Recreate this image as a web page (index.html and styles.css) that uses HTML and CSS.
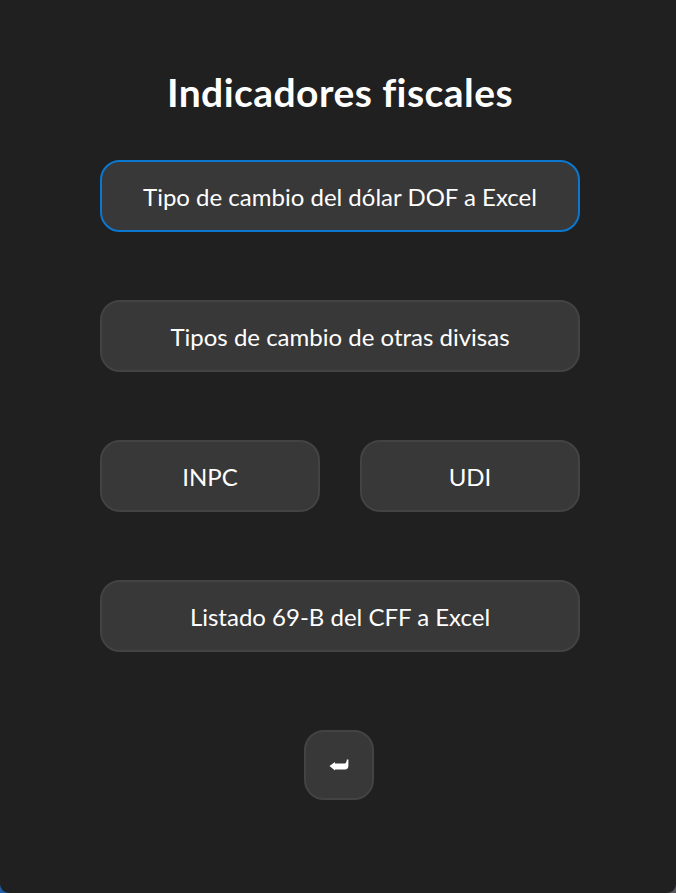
FILE: index.html
```html
<!DOCTYPE html>
<html lang="es">
  <head>
    <meta charset="UTF-8" />
    <meta name="viewport" content="width=device-width, initial-scale=1.0" />
    <title>Indicadores fiscales</title>
    <link rel="stylesheet" href="styles.css">
  </head>
  <body>
    <div class="window flex">
      <h1>Indicadores fiscales</h1>
      <div class="menu">
        <button class="btn focused">Tipo de cambio del dólar DOF a Excel</button>
        <button class="btn">Tipos de cambio de otras divisas</button>
        <div class="row">
          <button class="btn">INPC</button>
          <button class="btn">UDI</button>
        </div>
        <button class="btn">Listado 69-B del CFF a Excel</button>
      </div>
      <button class="btn back" aria-label="Volver">
        <svg width="20" height="12" viewBox="0 0 20 12">
          <path d="M0.5 7 L6 3 V4.6 H15 C16.6 4.6 17.6 3.8 17.8 0.6 H19.4 V6.8 C19.4 9.2 18.2 10.6 16 10.6 H6 V11.6 Z" fill="#fff" />
        </svg>
      </button>
    </div>
  </body>
</html>
```

FILE: styles.css
```css
* {
  margin: 0;
  padding: 0;
  box-sizing: border-box;
  font-family: Lato, "Open Sans", Arial, sans-serif;
}
html,
body {
  height: 100%;
  background: linear-gradient(to right, #1f5fa8, #55555a);
}
.flex {
  display: flex;
  flex-direction: column;
  align-items: center;
}

.window {
  height: 893px;
  padding: 67px 0 0 4px;
  background: #202020;
  border-radius: 0 0 9px 9px;
}

h1 {
  color: #fff;
  font-size: 39px;
  letter-spacing: 0.45px;
  line-height: 50px;
  font-weight: 700;
  margin-bottom: 43px;
}

.menu {
  display: flex;
  flex-direction: column;
  gap: 68px;
  width: 480px;
}

.row {
  display: flex;
  gap: 40px;
}

.row .btn {
  flex: 1;
}

.btn {
  height: 72px;
  padding-top: 1px;
  background: #383838;
  border: 2px solid #434343;
  border-radius: 20px;
  color: #fff;
  font-size: 24px;
  cursor: pointer;
}

.btn.focused {
  border-color: #0a78d0;
}

.back {
  display: flex;
  align-items: center;
  justify-content: center;
  width: 70px;
  height: 70px;
  margin: 78px 2px 0 0;
  padding-top: 0;
}
```
